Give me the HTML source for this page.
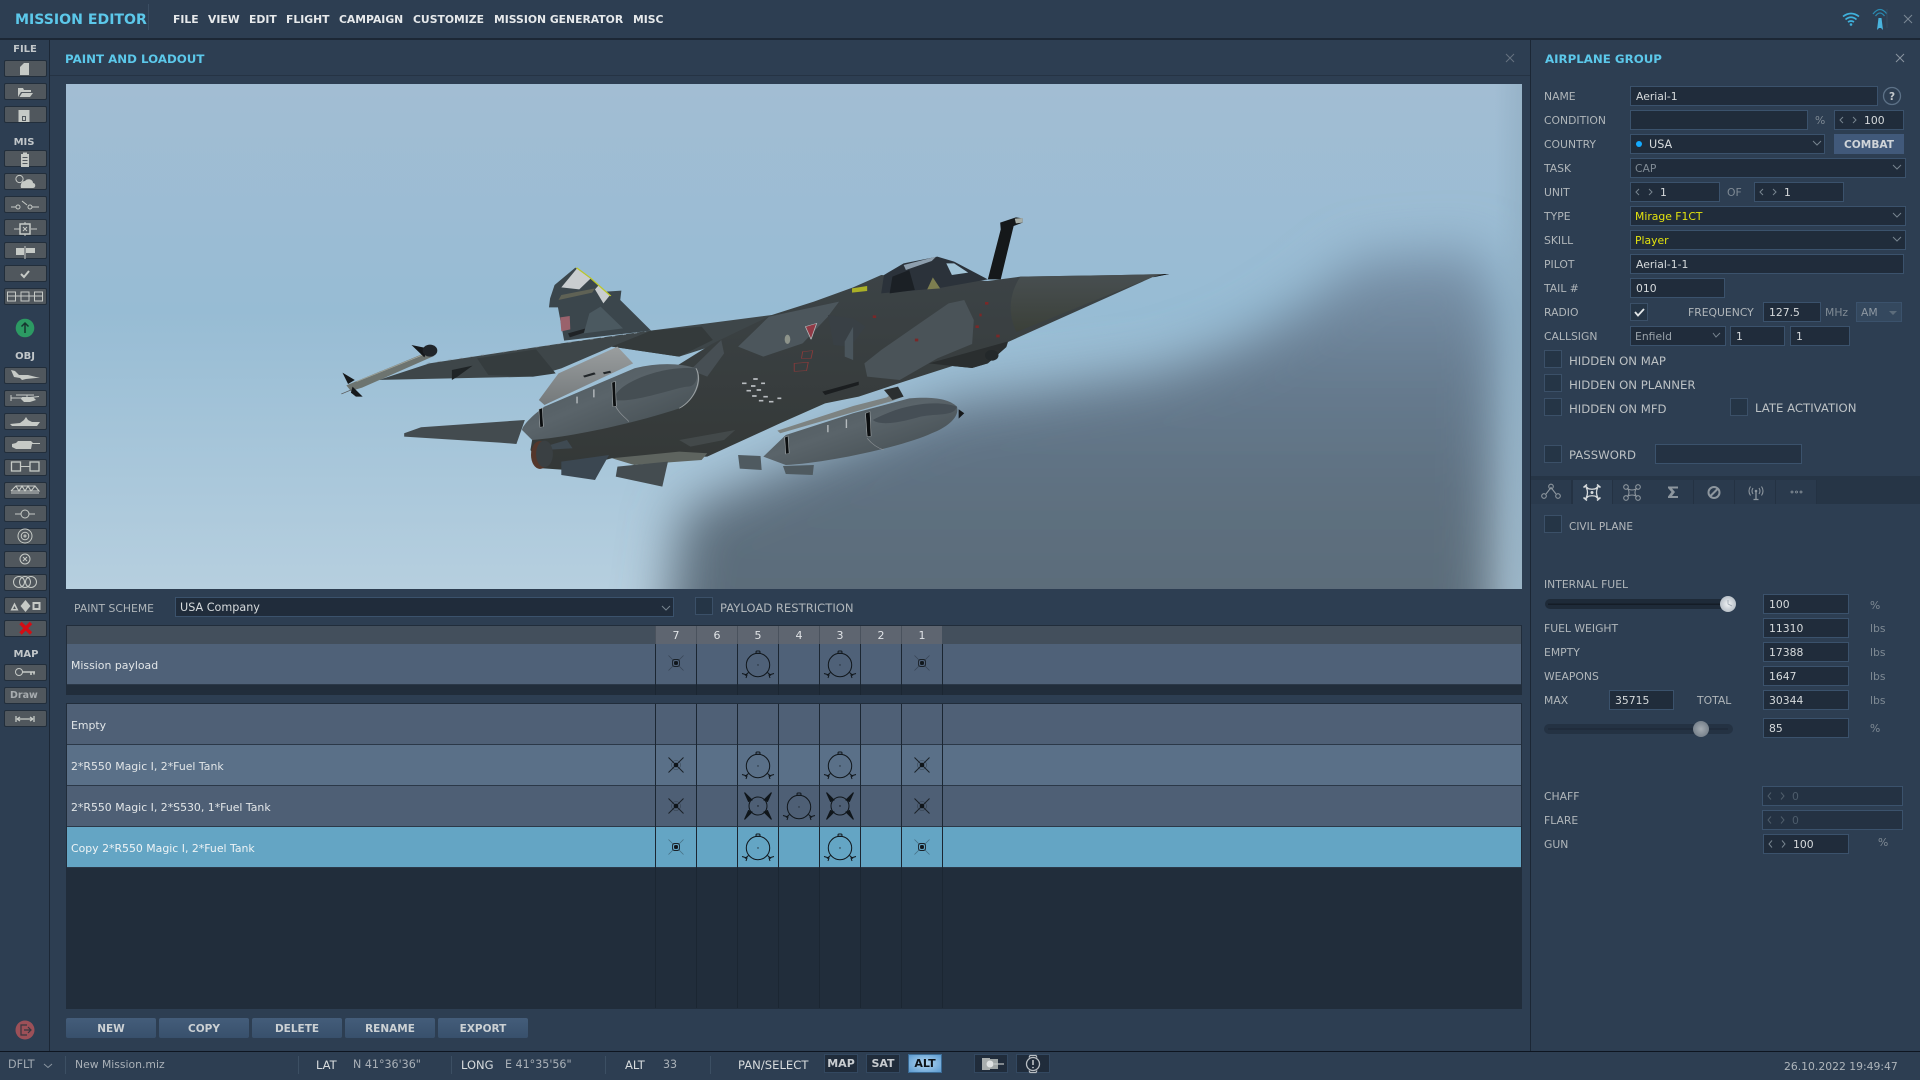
<!DOCTYPE html>
<html lang="en"><head><meta charset="utf-8"><title>Mission Editor</title>
<style>
html,body{margin:0;padding:0;width:1920px;height:1080px;overflow:hidden;background:#2d3e52}
body{position:relative;font-family:"DejaVu Sans","Liberation Sans",sans-serif;color:#b3b8bc}
div{box-sizing:border-box}
.a{position:absolute}
.t{position:absolute;margin-top:1px;line-height:20px;height:20px;white-space:nowrap;font-size:10.8px;color:#b0b6ba}
.w{color:#d6dadc}.y{color:#e3e30e}.g{color:#7f8a94}
.b{font-weight:bold}
.i{position:absolute;background:#202c3b;border:1px solid #3b526c;height:20px}
.c{position:absolute;width:18px;height:18px;border:1px solid #3b5068;background:#253546}
.tb{position:absolute;left:4px;width:43px;height:17px;background:#50575d;border:1px solid #222e3b;border-radius:2px}
.pb{position:absolute;top:1018px;width:90px;height:20px;background:linear-gradient(#445d7a,#38506c);border-radius:2px;color:#ccd1d4;font-weight:bold;font-size:10.5px;text-align:center;line-height:22px}
.st{position:absolute;top:1054px;width:34px;height:19px;background:#202c3b;border:1px solid #334860;color:#c8ccd0;font-weight:bold;font-size:11px;text-align:center;line-height:18px}
.lab{position:absolute;left:0;width:50px;margin-top:1px;text-align:center;font-size:10px;font-weight:bold;color:#c2c7ca;line-height:14px}
.row{position:absolute;left:67px;width:1454px;height:41px;border-bottom:1px solid #2b3848}
.row span{position:absolute;left:4px;top:1px;line-height:41px;font-size:10.9px;color:#e2e6e8}
.grid{position:absolute;left:655px;width:288px;background:repeating-linear-gradient(90deg,#1b2632 0 1px,transparent 1px 41px)}
.n{position:absolute;top:626px;width:41px;height:18px;background:#5e6570;color:#e0e3e6;font-size:11px;text-align:center;line-height:20px;border-left:1px solid #4a525d}
.tab{position:absolute;top:480px;width:41px;height:24px;background:#2a3a4d;border-right:1px solid #243243}
svg{position:absolute;left:0;top:0}
</style></head><body>

<!-- top bar -->
<div class="a" style="left:0;top:38px;width:1920px;height:2px;background:#1c2735"></div>
<div class="t b" style="left:15px;top:9px;font-size:14.1px;color:#5cc8ea">MISSION EDITOR</div>
<div class="a" style="left:148px;top:4px;width:1px;height:26px;background:#3b4e63"></div>
<div class="t b" style="left:173px;top:9px;color:#e6e9eb;font-size:10.8px">FILE</div>
<div class="t b" style="left:208px;top:9px;color:#e6e9eb;font-size:10.8px">VIEW</div>
<div class="t b" style="left:249px;top:9px;color:#e6e9eb;font-size:10.8px">EDIT</div>
<div class="t b" style="left:286px;top:9px;color:#e6e9eb;font-size:10.8px">FLIGHT</div>
<div class="t b" style="left:339px;top:9px;color:#e6e9eb;font-size:10.8px">CAMPAIGN</div>
<div class="t b" style="left:413px;top:9px;color:#e6e9eb;font-size:10.8px">CUSTOMIZE</div>
<div class="t b" style="left:494px;top:9px;color:#e6e9eb;font-size:10.8px">MISSION GENERATOR</div>
<div class="t b" style="left:633px;top:9px;color:#e6e9eb;font-size:10.8px">MISC</div>

<!-- left toolbar -->
<div class="a" style="left:49px;top:40px;width:1px;height:1011px;background:#1c2735"></div>
<div class="lab" style="top:42px">FILE</div>
<div class="tb" style="top:60px"></div><div class="tb" style="top:83px"></div><div class="tb" style="top:106px"></div>
<div class="lab" style="top:135px;left:-1px">MIS</div>
<div class="tb" style="top:150px"></div><div class="tb" style="top:173px"></div><div class="tb" style="top:196px"></div><div class="tb" style="top:219px"></div><div class="tb" style="top:242px"></div><div class="tb" style="top:265px"></div><div class="tb" style="top:288px"></div>
<div class="lab" style="top:349px">OBJ</div>
<div class="tb" style="top:367px"></div><div class="tb" style="top:390px"></div><div class="tb" style="top:413px"></div><div class="tb" style="top:436px"></div><div class="tb" style="top:459px"></div><div class="tb" style="top:482px"></div><div class="tb" style="top:505px"></div><div class="tb" style="top:528px"></div><div class="tb" style="top:551px"></div><div class="tb" style="top:574px"></div><div class="tb" style="top:597px"></div><div class="tb" style="top:620px"></div>
<div class="lab" style="top:647px;left:1px">MAP</div>
<div class="tb" style="top:664px"></div><div class="tb" style="top:687px"></div>
<div class="tb" style="top:710px"></div>
<div class="t b" style="left:10px;top:685px;font-size:9.5px;color:#a8adb0">Draw</div>

<!-- paint panel -->
<div class="a" style="left:50px;top:75px;width:1481px;height:1px;background:#253344"></div>
<div class="t b" style="left:65px;top:48px;font-size:11.8px;color:#5cc8ea">PAINT AND LOADOUT</div>
<div class="a" style="left:66px;top:84px;width:1456px;height:505px;background:#9cbdd5"></div>

<!-- jet / sky -->
<svg width="1920" height="1080" viewBox="0 0 1920 1080">
<defs>
<linearGradient id="sky" x1="0" y1="0" x2="0" y2="1"><stop offset="0" stop-color="#a2bdd3"/><stop offset=".45" stop-color="#97bcd4"/><stop offset="1" stop-color="#b6cfdf"/></linearGradient>
<linearGradient id="sm" x1="0" y1="0" x2="0" y2="1"><stop offset="0" stop-color="#7c96ae"/><stop offset=".3" stop-color="#677c90"/><stop offset=".6" stop-color="#5e7080"/><stop offset="1" stop-color="#5a6a76"/></linearGradient>
<linearGradient id="smr" x1="0" y1="0" x2="1" y2="0"><stop offset="0" stop-color="#8aa8bd" stop-opacity="0"/><stop offset="1" stop-color="#8ca9bd"/></linearGradient>
<filter id="bl" x="-20%" y="-20%" width="140%" height="140%"><feGaussianBlur stdDeviation="26"/></filter>
<clipPath id="ic"><rect x="66" y="84" width="1456" height="505"/></clipPath>
<linearGradient id="fus" x1="0" y1="0" x2="0" y2="1"><stop offset="0" stop-color="#3c4346"/><stop offset="1" stop-color="#343837"/></linearGradient>
<linearGradient id="tk" x1="0" y1="0" x2="1" y2="1"><stop offset="0" stop-color="#4c565b"/><stop offset=".45" stop-color="#5a646a"/><stop offset="1" stop-color="#3e474b"/></linearGradient>
<linearGradient id="nc" x1="0" y1="0" x2="0" y2="1"><stop offset="0" stop-color="#484f51"/><stop offset="1" stop-color="#3b4039"/></linearGradient>
<linearGradient id="py" x1="0" y1="0" x2="0" y2="1"><stop offset="0" stop-color="#9a9e9f"/><stop offset="1" stop-color="#74797b"/></linearGradient>
<radialGradient id="k1"><stop offset="0" stop-color="#f2f4f6"/><stop offset="1" stop-color="#b8c0c8"/></radialGradient>
<radialGradient id="k2"><stop offset="0" stop-color="#a4abb2"/><stop offset="1" stop-color="#78828c"/></radialGradient>
<g id="sx" stroke="#1a2128" fill="none"><path d="M-7.500 -7.500L7.500 7.500M7.500 -7.500L-7.500 7.500" stroke-width="1"/><circle r="2.300" fill="#10161b" stroke="none"/><circle r="4.500" stroke-width=".6" stroke-opacity=".5"/></g>
<g id="fx" stroke="#1a2128" fill="none"><path d="M-7.500 -7.500L7.500 7.500M7.500 -7.500L-7.500 7.500" stroke-width=".8" stroke-opacity=".4"/><rect x="-3.500" y="-3.500" width="7" height="7" stroke-width=".9" rx="2"/><circle r="2" fill="#10161b" stroke="none"/></g>
<g id="tc" stroke="#10161b" fill="none" stroke-width="1"><circle r="11.700"/><rect x="-2" y="-14" width="4" height="2.400" rx="1"/><path d="M-9.500 7.500L-13 10.500M-16 8.500L-11 10L-12 13M9.500 7.500L13 10.500M16 8.500L11 10L12 13"/><circle r=".7" fill="#222c35" stroke="none"/></g>
<g id="bx" stroke="#10161b" fill="none"><circle r="9" stroke-width="1"/><path d="M-13.500 -13.500L-6 -6L-9.500 -4.500L-13.500 -13.500M13.500 -13.500L6 -6L9.500 -4.500L13.500 -13.500M-13.500 13.500L-6 6L-9.500 4.500L-13.500 13.500M13.500 13.500L6 6L9.500 4.500L13.500 13.500" fill="#10161b" stroke-width="1"/><circle r=".7" fill="#10161b" stroke="none"/></g>
</defs>
<g clip-path="url(#ic)">
<rect x="66" y="84" width="1456" height="505" fill="url(#sky)"/>
<path d="M662 660L682 510L790 465L950 400L1061 385L1161 370L1241 342L1302 305L1362 258L1480 250L1500 320L1495 660Z" fill="url(#sm)" filter="url(#bl)"/>
<g transform="translate(320,200) scale(.5612,.3333)">
 <!-- rear tailplane -->
 <path d="M150 700L180 682L365 660L350 732L320 728L150 710Z" fill="#434b4f"/>
 <!-- fin -->
 <path d="M455 203L480 232L510 275L537 272L535 300L590 392L435 422L424 322L408 322L410 295L418 255Z" fill="#3b464c"/>
 <path d="M430 262L458 205L482 236L462 268Z" fill="#c9cdcf"/><path d="M490 268L497 255L517 285L505 310Z" fill="#c9cdcf"/>
 <path d="M457 203L482 234L518 288" stroke="#bcc72a" stroke-width="3" fill="none"/>
 <path d="M430 285L490 265L485 278L425 300Z" fill="#5f6255"/>
 <path d="M428 352L445 348L446 388L430 394Z" fill="#9a626c"/>
 <path d="M442 400L480 382L476 395L445 412Z" fill="#1f2326"/>
 <path d="M500 320L540 385L470 400L480 340Z" fill="#4b5960"/>
 <!-- wing -->
 <path d="M805 345L690 370L575 395L430 430L195 490L105 540L380 530L430 505L520 440L640 470L770 400Z" fill="#3e4649"/>
 <path d="M280 475L385 448L420 520L380 530L300 525Z" fill="#353c3e"/>
 <path d="M590 392L520 440L640 470L700 420L680 380Z" fill="#343a3b"/>
 <path d="M235 510L272 497L245 530L235 540Z" fill="#1f2426"/>
 <path d="M190 490L430 430L580 395" stroke="#8fa0ad" stroke-width="2" stroke-dasharray="6 14" fill="none"/>
 <!-- missile -->
 <path d="M47 556L190 457L203 468L75 563L55 573Z" fill="#6d7470"/>
 <path d="M65 545L190 460" stroke="#a6aa9f" stroke-width="2" fill="none"/>
 <path d="M40 518L62 540L50 552ZM58 560L76 590L64 590L55 578ZM163 435L192 445L186 472Z" fill="#16191c"/>
 <ellipse cx="196" cy="452" rx="13" ry="18" fill="#20252a"/>
 <path d="M38 582L55 570" stroke="#555" stroke-width="2"/>
 <!-- pylon -->
 <path d="M530 440L558 490L520 520L400 615L390 600L425 520Z" fill="url(#py)"/>
 <path d="M470 530L490 520M505 520L518 515" stroke="#22272a" stroke-width="6"/>
 <!-- fuselage -->
 <path d="M1513 222L1484 231L1226 426L1223 441L1190 490L1162 504L1127 498L1033 549L960 590L900 610L820 670L690 770L520 775L440 810L395 805L375 750L380 700L500 640L700 430L805 345L880 305L950 262L1000 225L1190 243L1248 230L1428 225Z" fill="url(#fus)"/>
 <path d="M1513 222L1484 231L1241 396C1225 340 1228 280 1248 230L1428 225Z" fill="url(#nc)"/>
 <path d="M1148 300L1120 310L1060 380L1000 450L970 490L975 530L1033 540L1100 475L1162 432L1165 360Z" fill="#4a5358"/>
 <path d="M745 440L800 350L925 305L905 350L860 430L790 470Z" fill="#4c565c"/>
 <path d="M715 420L660 510L690 530L720 460Z" fill="#474f54"/>
 <path d="M1085 490L1225 425L1223 441L1190 490L1162 504L1127 498Z" fill="#2a2e2f"/>
 <ellipse cx="1197" cy="466" rx="12" ry="16" fill="#23282a"/>
 <path d="M905 345L950 355L972 380L945 440L915 435Z" fill="#394045"/>
 <path d="M935 425L950 380L950 480L935 470Z" fill="#4a555c"/>
 <path d="M865 380L885 370L875 418Z" fill="#913a46" stroke="#b5b8ba" stroke-width="1.500"/>
 <ellipse cx="833" cy="418" rx="5" ry="14" fill="#8d938a"/>
 <path d="M860 455L878 452L875 475L858 475ZM845 490L870 487L867 512L845 514Z" fill="none" stroke="#8f3a3a" stroke-width="1.500"/>
 <path d="M752 550l8 0M772 537l8 0M768 558l8 0M786 550l7 0M760 572l8 0M778 570l8 0M770 588l8 0M790 590l8 0M782 602l8 0M800 605l8 0M815 595l7 0" stroke="#b9bdc1" stroke-width="5"/>
 <path d="M1175 345l4 0M1168 380l6 0M1185 310l6 0M1205 408l6 0M1060 420l6 0M985 350l6 0" stroke="#7a2828" stroke-width="8"/>
 <path d="M895 575L960 545L960 555L900 585Z" fill="#1b1e20"/>
 <!-- belly details -->
 <path d="M815 692L950 618L1010 592L1032 565L1038 590L1020 603L820 700Z" fill="#7d8382"/>
 <path d="M1005 570L1030 560L1040 590L1020 600Z" fill="#2b2f30"/>
 <path d="M520 775L640 755L690 760L680 780L560 795Z" fill="#5e645f"/>
 <path d="M640 720L740 690L720 720L660 740Z" fill="#43494a"/>
 <!-- canopy -->
 <path d="M1000 280L1005 225L1040 190L1100 170L1130 185L1190 238L1100 265Z" fill="#2b323a"/>
 <path d="M1040 195L1098 170L1090 183L1044 210Z" fill="#8e9fae"/>
 <path d="M1116 190L1126 225L1155 218L1130 190Z" fill="#a3c5d8"/>
 <path d="M1082 268L1092 232L1105 265Z" fill="#7d7e50"/>
 <path d="M1020 230L1050 210L1060 270L1015 280Z" fill="#1b2025"/>
 <path d="M948 265L975 258L975 273L948 278Z" fill="#aab027"/>
 <!-- probe -->
 <path d="M1190 238L1213 88L1212 68L1240 52L1252 55L1252 68L1236 78L1213 238Z" fill="#15181a"/>
 <path d="M1238 56L1252 54L1252 68L1240 70Z" fill="#a7aea8"/>
 <path d="M1505 222L1513 222L1484 232L1490 228Z" fill="#15181a"/>
 <!-- tank 1 -->
 <path d="M400 740L440 720L450 745L400 750Z" fill="#3f4a52"/>
 <path d="M670 505C640 488 600 488 560 505L400 620C375 650 360 680 360 690L378 720C450 710 560 670 640 625C670 600 685 540 670 505Z" fill="url(#tk)"/>
 <path d="M670 505C600 495 520 560 525 600C560 610 640 560 655 560C670 560 675 530 670 505Z" fill="#454e53"/>
 <path d="M525 610C530 640 550 660 550 665" stroke="#8d9296" stroke-width="1.500" fill="none"/>
 <path d="M670 505C682 540 668 600 640 625" stroke="#9ca2a4" stroke-width="2" fill="none"/>
 <path d="M390 628L396 624L398 680L392 682ZM520 548L526 544L528 618L522 620Z" fill="#0c0f11" stroke="#a8aeb0" stroke-width="1"/>
 <path d="M458 590l0 20M488 568l0 24" stroke="#b5bbbe" stroke-width="2.500"/>
 <!-- tank 2 -->
 <path d="M745 765L785 768L787 810L748 806ZM825 798L880 795L878 825L830 822Z" fill="#4f5a60"/>
 <path d="M1135 620C1120 595 1090 590 1050 595L950 640L830 705L790 770L830 795C900 790 1040 740 1090 700C1120 680 1140 650 1135 620Z" fill="url(#tk)"/>
 <path d="M1135 620C1100 600 1040 610 985 660C1000 680 1040 665 1070 650C1100 640 1130 650 1135 620Z" fill="#454e55"/>
 <path d="M975 715C985 735 995 745 1005 750" stroke="#8d9296" stroke-width="1.500" fill="none"/>
 <path d="M828 712L834 708L836 760L830 762ZM972 640L980 635L982 708L975 710Z" fill="#0c0f11" stroke="#a8aeb0" stroke-width="1"/>
 <path d="M905 675l0 22M938 658l0 26" stroke="#b5bbbe" stroke-width="2.500"/>
 <path d="M1138 628L1148 640L1138 656Z" fill="#15181a"/>
 <!-- rear ventral -->
 <ellipse cx="392" cy="765" rx="16" ry="42" fill="#54372c"/>
 <ellipse cx="400" cy="762" rx="15" ry="40" fill="#3a4043"/>
 <path d="M430 785L515 765L490 840L430 825Z" fill="#3b4751"/>
 <path d="M530 800L620 785L610 860L527 830Z" fill="#444c50"/>
</g>
<rect x="1495" y="84" width="27" height="505" fill="url(#smr)" opacity=".5"/>
</g>

<!-- top right icons -->
<g fill="none" stroke="#3fb1dc" stroke-width="1.700"><path d="M1843 16.500Q1851 10.500 1859 16.500M1845.500 19.500Q1851 15 1856.500 19.500M1848 22Q1851 20 1854 22"/></g><circle cx="1851" cy="24.500" r="1.300" fill="#3fb1dc"/>
<path d="M1877 30L1878.500 18L1881.500 18L1883 30L1881 28L1879 28Z" fill="#49b4de"/><path d="M1873 14Q1880 5 1887 14M1875.500 16Q1880 10 1884.500 16" fill="none" stroke="#2a8ab0" stroke-width="1.300"/><path d="M1887 9L1887 28" stroke="#35495e" stroke-width="1"/>
<path d="M1904 15L1912 23M1912 15L1904 23" stroke="#7a8794" stroke-width="1" fill="none"/>
<path d="M1506 54L1514 62M1514 54L1506 62" stroke="#66727f" stroke-width="1" fill="none"/>
<path d="M1896 54L1904 62M1904 54L1896 62" stroke="#8a95a0" stroke-width="1" fill="none"/>

<!-- toolbar icons -->
<g fill="#c6cac6" stroke="none">
<path d="M24 63L29 63L29 75L20 75L20 67Z"/>
<path d="M18 88L23 88L24 90L31 90L31 92L21 92L18 97ZM22 93L33 93L30 97L19.500 97Z"/>
<path d="M18.500 110L29.500 110L29.500 122L18.500 122ZM22 116L22 121L26 121L26 116Z M23 117L25 117L25 120L23 120Z" fill-rule="evenodd"/>
<path d="M21 154L29 154L29 167L21 167ZM22.500 157L22.500 158L27.500 158L27.500 157ZM22.500 160L22.500 161L27.500 161L27.500 160ZM22.500 163L22.500 164L27.500 164L27.500 163Z" fill-rule="evenodd"/>
<rect x="23" y="152.500" width="4" height="2"/>
<path d="M21 188L33 188C36 188 36 183 33 183C33 179 27 178 25 181C22 181 20 184 21 188Z"/>
</g>
<g fill="none" stroke="#c6cac6" stroke-width="1">
<circle cx="19.500" cy="179" r="3.600"/>
<path d="M11 207L16 207M20 207L20 207M22 201L27 205M32 207L39 207"/><circle cx="18" cy="207" r="2"/><circle cx="30" cy="207" r="2"/>
<path d="M14 229L20 229M31 229L37 229M25 222L25 224M25 234L25 236"/><rect x="20" y="224" width="10" height="10" stroke-width="1.500"/><path d="M23 227L27 231M27 227L23 231"/>
<path d="M25 246L25 259"/>
<path d="M7 296L43 296"/>
<rect x="7.500" y="292" width="8" height="9"/><rect x="21" y="292" width="8" height="9"/><rect x="34.500" y="292" width="8" height="9"/>
<path d="M21 274L24 277L29 271" stroke-width="2"/>
<rect x="11.500" y="462" width="9" height="9" stroke-width="1.300"/><rect x="30" y="462" width="9" height="9" stroke-width="1.300"/><path d="M20.500 466.500L30 466.500"/>
<path d="M11 491L16 486L19 491L22 486L25 491L28 486L31 491L35 486L39 491L11 491M16 486L35 486M11 493L39 493" stroke-width="1.100"/>
<path d="M15 514L21 514M29 514L35 514"/><circle cx="25" cy="514" r="4"/>
<circle cx="25" cy="536" r="7"/><circle cx="25" cy="536" r="3.800"/><circle cx="25" cy="536" r="1"/>
<circle cx="25" cy="559" r="5"/><path d="M23 557L27 561M27 557L23 561"/>
<circle cx="19" cy="582" r="5.500"/><circle cx="25" cy="582" r="5.500"/><circle cx="31" cy="582" r="5.500"/>
<circle cx="19" cy="672" r="3.500"/><path d="M22.500 672L35 672M31 672L31 675M34 672L34 674.500" stroke-width="1.600"/>
<path d="M16 716L16 722M34 716L34 722M17 719L33 719M17 719L20 717M17 719L20 721M33 719L30 717M33 719L30 721" stroke-width="1.300"/>
</g>
<g fill="#c6cac6">
<path d="M16 248L24 248L24 255L16 255ZM26 248L35 248L35 253L26 253Z"/>
<path d="M11 370L15 371L19 375L28 375L36 377L40 377.500L36 378L26 379L22 380L20 378L14 377Z"/>
<path d="M22 397L33 397L36 400L30 402L24 402L21 399Z"/>
<path d="M10 424L20 423L24 420L26 417L28 420L32 422L40 422L37 426L12 426Z"/>
<path d="M12 444L16 443L18 441L31 441L33 443L40 443L40 444L32 444L31 449L16 449L12 447Z"/>
<path d="M10.500 610.500L14.500 602.500L18.500 610.500ZM13 609L16 609L14.500 606Z" fill-rule="evenodd"/>
<path d="M25.500 600L30.500 606L25.500 612L20.500 606Z"/>
<path d="M32.500 602L40.500 602L40.500 610L32.500 610ZM34.500 604L34.500 608L38.500 608L38.500 604Z" fill-rule="evenodd"/>
</g>
<path d="M11 395L11 401M11 398L22 398M16 395L34 395M27 395L27 397M30 397.500L39 396.500" stroke="#c6cac6" stroke-width="1" fill="none"/>
<path d="M20.500 623L31 633.500M31 623L20.500 633.500" stroke="#d30d14" stroke-width="3.400"/>
<circle cx="25" cy="328" r="9.300" fill="#2c9a63"/><path d="M25 333L25 323M21.500 326.500L25 323L28.500 326.500" stroke="#16352f" stroke-width="1.500" fill="none"/>
<circle cx="25" cy="1030" r="9.500" fill="#9c5058"/><path d="M27 1025L21 1025L21 1035L27 1035M24 1030L31 1030M28 1027L31 1030L28 1033" stroke="#37363f" stroke-width="1.200" fill="none"/>
</svg>

<!-- paint scheme row -->
<div class="t" style="left:74px;top:598px">PAINT SCHEME</div>
<div class="i" style="left:175px;top:597px;width:499px"></div>
<div class="t w" style="left:180px;top:597px;font-size:11.2px">USA Company</div>
<div class="c" style="left:695px;top:597px"></div>
<div class="t" style="left:720px;top:597px;font-size:11.6px">PAYLOAD RESTRICTION</div>

<!-- table 1 -->
<div class="a" style="left:66px;top:625px;width:1456px;height:70px;background:#212d3b"></div>
<div class="a" style="left:67px;top:626px;width:1454px;height:18px;background:#434f5c"></div>
<div class="n" style="left:655px">7</div><div class="n" style="left:696px">6</div><div class="n" style="left:737px">5</div><div class="n" style="left:778px">4</div><div class="n" style="left:819px">3</div><div class="n" style="left:860px">2</div><div class="n" style="left:901px">1</div>
<div class="row" style="top:644px;background:#4f6178"><span>Mission payload</span></div>
<div class="grid" style="top:644px;height:51px"></div>

<!-- table 2 -->
<div class="a" style="left:66px;top:703px;width:1456px;height:306px;background:#212d3b"></div>
<div class="row" style="top:704px;background:#4f6076"><span>Empty</span></div>
<div class="row" style="top:745px;background:#5a7088"><span>2*R550 Magic I, 2*Fuel Tank</span></div>
<div class="row" style="top:786px;background:#4e5f75"><span>2*R550 Magic I, 2*S530, 1*Fuel Tank</span></div>
<div class="row" style="top:827px;background:#64a5c4"><span style="color:#eef3f5">Copy 2*R550 Magic I, 2*Fuel Tank</span></div>
<div class="grid" style="top:704px;height:304px"></div>

<!-- payload icons -->
<svg width="1920" height="1080" viewBox="0 0 1920 1080">
<use href="#fx" x="676" y="663"/><use href="#fx" x="922" y="663"/><use href="#tc" x="758" y="665"/><use href="#tc" x="840" y="665"/>
<use href="#sx" x="676" y="765"/><use href="#sx" x="922" y="765"/><use href="#tc" x="758" y="766"/><use href="#tc" x="840" y="766"/>
<use href="#sx" x="676" y="806"/><use href="#sx" x="922" y="806"/><use href="#bx" x="758" y="806"/><use href="#bx" x="840" y="806"/><use href="#tc" x="799" y="807"/>
<use href="#fx" x="676" y="847"/><use href="#fx" x="922" y="847"/><use href="#tc" x="758" y="848"/><use href="#tc" x="840" y="848"/>
</svg>

<!-- bottom buttons -->
<div class="pb" style="left:66px">NEW</div><div class="pb" style="left:159px">COPY</div><div class="pb" style="left:252px">DELETE</div><div class="pb" style="left:345px">RENAME</div><div class="pb" style="left:438px">EXPORT</div>

<!-- right panel -->
<div class="a" style="left:1530px;top:40px;width:1px;height:1011px;background:#1c2735"></div>
<div class="t b" style="left:1545px;top:48px;font-size:11.8px;color:#5cc8ea">AIRPLANE GROUP</div>

<div class="t" style="left:1544px;top:86px">NAME</div>
<div class="i" style="left:1630px;top:86px;width:248px"></div><div class="t w" style="left:1636px;top:86px">Aerial-1</div>
<div class="t" style="left:1544px;top:110px">CONDITION</div>
<div class="i" style="left:1630px;top:110px;width:178px"></div><div class="t g" style="left:1815px;top:110px">%</div>
<div class="i" style="left:1834px;top:110px;width:70px"></div><div class="t w" style="left:1864px;top:110px">100</div>
<div class="t" style="left:1544px;top:134px">COUNTRY</div>
<div class="i" style="left:1630px;top:134px;width:195px"></div><div class="t w" style="left:1649px;top:134px;font-size:11.2px">USA</div>
<div class="a b" style="left:1834px;top:134px;width:70px;height:20px;background:#41597a;color:#d0d5d9;font-size:10.6px;text-align:center;line-height:22px">COMBAT</div>
<div class="t" style="left:1544px;top:158px">TASK</div>
<div class="i" style="left:1630px;top:158px;width:276px"></div><div class="t g" style="left:1635px;top:158px">CAP</div>
<div class="t" style="left:1544px;top:182px">UNIT</div>
<div class="i" style="left:1630px;top:182px;width:90px"></div><div class="t w" style="left:1660px;top:182px">1</div>
<div class="t g" style="left:1727px;top:182px">OF</div>
<div class="i" style="left:1754px;top:182px;width:90px"></div><div class="t w" style="left:1784px;top:182px">1</div>
<div class="t" style="left:1544px;top:206px">TYPE</div>
<div class="i" style="left:1630px;top:206px;width:276px"></div><div class="t y" style="left:1635px;top:206px">Mirage F1CT</div>
<div class="t" style="left:1544px;top:230px">SKILL</div>
<div class="i" style="left:1630px;top:230px;width:276px"></div><div class="t y" style="left:1635px;top:230px">Player</div>
<div class="t" style="left:1544px;top:254px">PILOT</div>
<div class="i" style="left:1630px;top:254px;width:274px"></div><div class="t w" style="left:1636px;top:254px">Aerial-1-1</div>
<div class="t" style="left:1544px;top:278px">TAIL #</div>
<div class="i" style="left:1630px;top:278px;width:95px"></div><div class="t w" style="left:1636px;top:278px">010</div>
<div class="t" style="left:1544px;top:302px">RADIO</div>
<div class="c" style="left:1630px;top:303px"></div>
<div class="t" style="left:1688px;top:302px">FREQUENCY</div>
<div class="i" style="left:1763px;top:302px;width:58px"></div><div class="t w" style="left:1769px;top:302px">127.5</div>
<div class="t g" style="left:1825px;top:302px">MHz</div>
<div class="i" style="left:1856px;top:302px;width:46px;background:#34485e"></div><div class="t g" style="left:1861px;top:302px;color:#8e98a2">AM</div>
<div class="t" style="left:1544px;top:326px">CALLSIGN</div>
<div class="i" style="left:1630px;top:326px;width:96px"></div><div class="t" style="left:1635px;top:326px;color:#9aa3aa">Enfield</div>
<div class="i" style="left:1730px;top:326px;width:55px"></div><div class="t w" style="left:1736px;top:326px">1</div>
<div class="i" style="left:1790px;top:326px;width:60px"></div><div class="t w" style="left:1796px;top:326px">1</div>

<div class="c" style="left:1544px;top:350px"></div><div class="t" style="left:1569px;top:350px;font-size:11.7px;color:#bcc1c4">HIDDEN ON MAP</div>
<div class="c" style="left:1544px;top:374px"></div><div class="t" style="left:1569px;top:374px;font-size:11.7px;color:#bcc1c4">HIDDEN ON PLANNER</div>
<div class="c" style="left:1544px;top:398px"></div><div class="t" style="left:1569px;top:398px;font-size:11.7px;color:#bcc1c4">HIDDEN ON MFD</div>
<div class="c" style="left:1730px;top:398px"></div><div class="t" style="left:1755px;top:397px;font-size:11.7px;color:#bcc1c4">LATE ACTIVATION</div>
<div class="c" style="left:1544px;top:445px"></div><div class="t" style="left:1569px;top:444px;font-size:11.7px;color:#bcc1c4">PASSWORD</div>
<div class="i" style="left:1655px;top:444px;width:147px;background:#243243"></div>

<!-- tabs -->
<div class="a" style="left:1531px;top:476px;width:389px;height:28px;background:#263546"></div>
<div class="tab" style="left:1531px"></div><div class="tab" style="left:1572px;background:#2d3e52;border-left:1px solid #243243;border-right:1px solid #243243"></div><div class="tab" style="left:1613px"></div><div class="tab" style="left:1653px"></div><div class="tab" style="left:1694px"></div><div class="tab" style="left:1735px"></div><div class="tab" style="left:1776px"></div>

<div class="c" style="left:1544px;top:515px"></div><div class="t" style="left:1569px;top:516px;font-size:10.5px;color:#b3b8bc">CIVIL PLANE</div>
<div class="t" style="left:1544px;top:574px">INTERNAL FUEL</div>
<div class="i" style="left:1763px;top:594px;width:86px"></div><div class="t w" style="left:1769px;top:594px">100</div><div class="t g" style="left:1870px;top:595px">%</div>
<div class="t" style="left:1544px;top:618px">FUEL WEIGHT</div>
<div class="i" style="left:1763px;top:618px;width:86px"></div><div class="t w" style="left:1769px;top:618px">11310</div><div class="t g" style="left:1870px;top:618px">lbs</div>
<div class="t" style="left:1544px;top:642px">EMPTY</div>
<div class="i" style="left:1763px;top:642px;width:86px"></div><div class="t w" style="left:1769px;top:642px">17388</div><div class="t g" style="left:1870px;top:642px">lbs</div>
<div class="t" style="left:1544px;top:666px">WEAPONS</div>
<div class="i" style="left:1763px;top:666px;width:86px"></div><div class="t w" style="left:1769px;top:666px">1647</div><div class="t g" style="left:1870px;top:666px">lbs</div>
<div class="t" style="left:1544px;top:690px">MAX</div>
<div class="i" style="left:1609px;top:690px;width:65px"></div><div class="t w" style="left:1615px;top:690px">35715</div>
<div class="t" style="left:1697px;top:690px">TOTAL</div>
<div class="i" style="left:1763px;top:690px;width:86px"></div><div class="t w" style="left:1769px;top:690px">30344</div><div class="t g" style="left:1870px;top:690px">lbs</div>
<div class="i" style="left:1763px;top:718px;width:86px"></div><div class="t w" style="left:1769px;top:718px">85</div><div class="t g" style="left:1870px;top:718px">%</div>
<div class="t" style="left:1544px;top:786px">CHAFF</div>
<div class="i" style="left:1762px;top:786px;width:141px;background:#243243"></div><div class="t" style="left:1792px;top:786px;color:#4d5c6b">0</div>
<div class="t" style="left:1544px;top:810px">FLARE</div>
<div class="i" style="left:1762px;top:810px;width:141px;background:#243243"></div><div class="t" style="left:1792px;top:810px;color:#4d5c6b">0</div>
<div class="t" style="left:1544px;top:834px">GUN</div>
<div class="i" style="left:1763px;top:834px;width:86px"></div><div class="t w" style="left:1793px;top:834px">100</div><div class="t g" style="left:1878px;top:832px">%</div>

<div class="a" style="left:1545px;top:599px;width:188px;height:10px;border-radius:5px;background:#1e2a38"></div>
<div class="a" style="left:1544px;top:724px;width:189px;height:10px;border-radius:5px;background:#243243"></div>

<!-- right panel icons -->
<svg width="1920" height="1080" viewBox="0 0 1920 1080">
<circle cx="1892" cy="96" r="8.500" fill="none" stroke="#5c7187" stroke-width="1.300"/>
<text x="1892" y="100" font-size="10.500" font-weight="bold" text-anchor="middle" fill="#c4c9cd" font-family="DejaVu Sans, sans-serif">?</text>
<circle cx="1639" cy="144" r="3" fill="#14aaff"/>
<g fill="none" stroke="#77848f" stroke-width="1">
<path d="M1816 142L1820 146L1824 142" transform="translate(-3,-1)"/>
<path d="M1893 165L1897 169L1901 165"/><path d="M1893 213L1897 217L1901 213"/><path d="M1893 237L1897 241L1901 237"/>
<path d="M1714 333L1717 337L1721 333" transform="translate(-1,0)"/>
<path d="M662 606L666 610L670 606"/>
<path d="M1843 117L1840 120L1843 123M1853 117L1856 120L1853 123"/>
<path d="M1639 189L1636 192L1639 195M1649 189L1652 192L1649 195"/>
<path d="M1763 189L1760 192L1763 195M1773 189L1776 192L1773 195"/>
<path d="M1772 840.500L1769 844L1772 847.500M1782 840.500L1785 844L1782 847.500" />
</g>
<g fill="none" stroke="#4f5d6b" stroke-width="1">
<path d="M1771 792.500L1768 796L1771 799.500M1781 792.500L1784 796L1781 799.500"/>
<path d="M1771 816.500L1768 820L1771 823.500M1781 816.500L1784 820L1781 823.500"/>
</g>
<path d="M1635 312L1638 315.500L1644 309" fill="none" stroke="#e2e6e8" stroke-width="1.800"/>
<path d="M1889 311L1897 311L1893 315Z" fill="#5c6c7b"/>
<!-- tabs icons -->
<g fill="none" stroke="#8d969e" stroke-width="1.100">
<path d="M1546 494L1551 487.500L1556 494"/><circle cx="1544" cy="496" r="2.300"/><circle cx="1551" cy="486.500" r="2.300"/><circle cx="1558" cy="496" r="2.300"/>
<g><path d="M1628 489Q1632 491 1636 489Q1634 492.500 1636 496Q1632 494 1628 496Q1630 492.500 1628 489Z"/><circle cx="1626" cy="487" r="2.300"/><circle cx="1638" cy="487" r="2.300"/><circle cx="1626" cy="498" r="2.300"/><circle cx="1638" cy="498" r="2.300"/></g>
<circle cx="1714" cy="492.500" r="5.500" stroke-width="2"/><path d="M1710 496.500L1718 488.500" stroke-width="2"/>
<path d="M1753 488Q1751 491 1753 494M1750.500 486.500Q1747.500 491 1750.500 495.500M1759 488Q1761 491 1759 494M1761.500 486.500Q1764.500 491 1761.500 495.500"/>
</g>
<g fill="none" stroke="#d6dadc" stroke-width="1.500"><path d="M1586.500 488Q1592 490.500 1597.500 488Q1595.500 492.500 1597.500 497Q1592 494.500 1586.500 497Q1588.500 492.500 1586.500 488Z" stroke-width="1.300"/><path d="M1585 485.500L1588 488.500M1599 485.500L1596 488.500M1585 499.500L1588 496.500M1599 499.500L1596 496.500M1583.500 487.500L1587 484.500M1597 484.500L1600.500 487.500M1583.500 497.500L1587 500.500M1597 500.500L1600.500 497.500"/></g>
<circle cx="1592" cy="492.500" r="1.500" fill="#d6dadc"/>
<path d="M1668 486.500L1678 486.500L1678 488.500L1672 488.500L1675 492L1672 496L1678 496L1678 498L1668 498L1668 496.500L1671.500 492L1668 488Z" fill="#8d969e"/>
<path d="M1756 492L1756 499M1753.500 499.500L1758.500 499.500" stroke="#8d969e" stroke-width="1.300"/><circle cx="1756" cy="491" r="1.300" fill="#8d969e"/>
<g fill="none" stroke="#8d969e" stroke-width=".8"><circle cx="1792" cy="492" r="1"/><circle cx="1796.500" cy="492" r="1"/><circle cx="1801" cy="492" r="1"/></g>
<!-- slider knobs -->
<rect x="1548" y="603.500" width="175" height="1.500" fill="#141c26"/>
<circle cx="1728" cy="604" r="8" fill="url(#k1)"/><path d="M1728 600L1728 604L1732 606" stroke="#98a2ac" stroke-width=".8" fill="none"/>
<rect x="1548" y="728.500" width="180" height="1" fill="#1c2734"/>
<circle cx="1701" cy="729" r="8" fill="url(#k2)"/>
<!-- status icon buttons -->
<rect x="974.500" y="1054.500" width="33" height="18" fill="#202c3b" stroke="#334860"/>
<rect x="1016.500" y="1054.500" width="33" height="18" fill="#202c3b" stroke="#334860"/>
<rect x="982" y="1058" width="8" height="12" fill="#a9aeae"/><rect x="990" y="1059" width="8" height="10" fill="#9fa6a6"/><circle cx="990" cy="1064" r="3.500" fill="#dfe2e2"/><path d="M994 1064L1004 1064" stroke="#c3c7c7" stroke-width="1.200"/>
<circle cx="1033" cy="1064" r="6.500" fill="none" stroke="#b9bec3" stroke-width="1.300"/><path d="M1029 1057.500L1030 1055.500L1036 1055.500L1037 1057.500M1029 1070.500L1030 1072.500L1036 1072.500L1037 1070.500" fill="none" stroke="#b9bec3" stroke-width="1.200"/><path d="M1033 1060L1033 1065" stroke="#d5d8da" stroke-width="1.400"/><circle cx="1033" cy="1067.500" r=".8" fill="#d5d8da"/>
<path d="M44 1064L48 1067.500L52 1064" fill="none" stroke="#8a95a0" stroke-width="1"/>
</svg>

<!-- status bar -->
<div class="a" style="left:0;top:1051px;width:1920px;height:1px;background:#0e1520"></div>
<div class="t" style="left:8px;top:1054px;color:#a2aab2;font-size:11.2px">DFLT</div>
<div class="a" style="left:65px;top:1056px;width:1px;height:18px;background:#3c4f63"></div>
<div class="t" style="left:75px;top:1054px;color:#aab1b8">New Mission.miz</div>
<div class="a" style="left:298px;top:1056px;width:1px;height:18px;background:#3c4f63"></div>
<div class="t" style="left:316px;top:1054px;color:#d8dcde;font-size:11.5px">LAT</div>
<div class="t" style="left:353px;top:1054px;color:#aab1b8;font-size:11.1px">N 41°36'36"</div>
<div class="a" style="left:451px;top:1056px;width:1px;height:18px;background:#3c4f63"></div>
<div class="t" style="left:461px;top:1054px;color:#d8dcde;font-size:11.5px">LONG</div>
<div class="t" style="left:505px;top:1054px;color:#aab1b8;font-size:11.1px">E 41°35'56"</div>
<div class="a" style="left:605px;top:1056px;width:1px;height:18px;background:#3c4f63"></div>
<div class="t" style="left:625px;top:1054px;color:#d8dcde;font-size:11.5px">ALT</div>
<div class="t" style="left:663px;top:1054px;color:#aab1b8;font-size:11.1px">33</div>
<div class="a" style="left:710px;top:1056px;width:1px;height:18px;background:#3c4f63"></div>
<div class="t" style="left:738px;top:1054px;color:#d8dcde;font-size:11.6px">PAN/SELECT</div>
<div class="st" style="left:824px">MAP</div>
<div class="st" style="left:866px">SAT</div>
<div class="st" style="left:908px;background:radial-gradient(ellipse at center,#b5d8f2,#5b9ad0);color:#0c1218;border-color:#3a6a94">ALT</div>
<div class="t" style="left:1784px;top:1056px;color:#aeb5bb">26.10.2022 19:49:47</div>
</body></html>
